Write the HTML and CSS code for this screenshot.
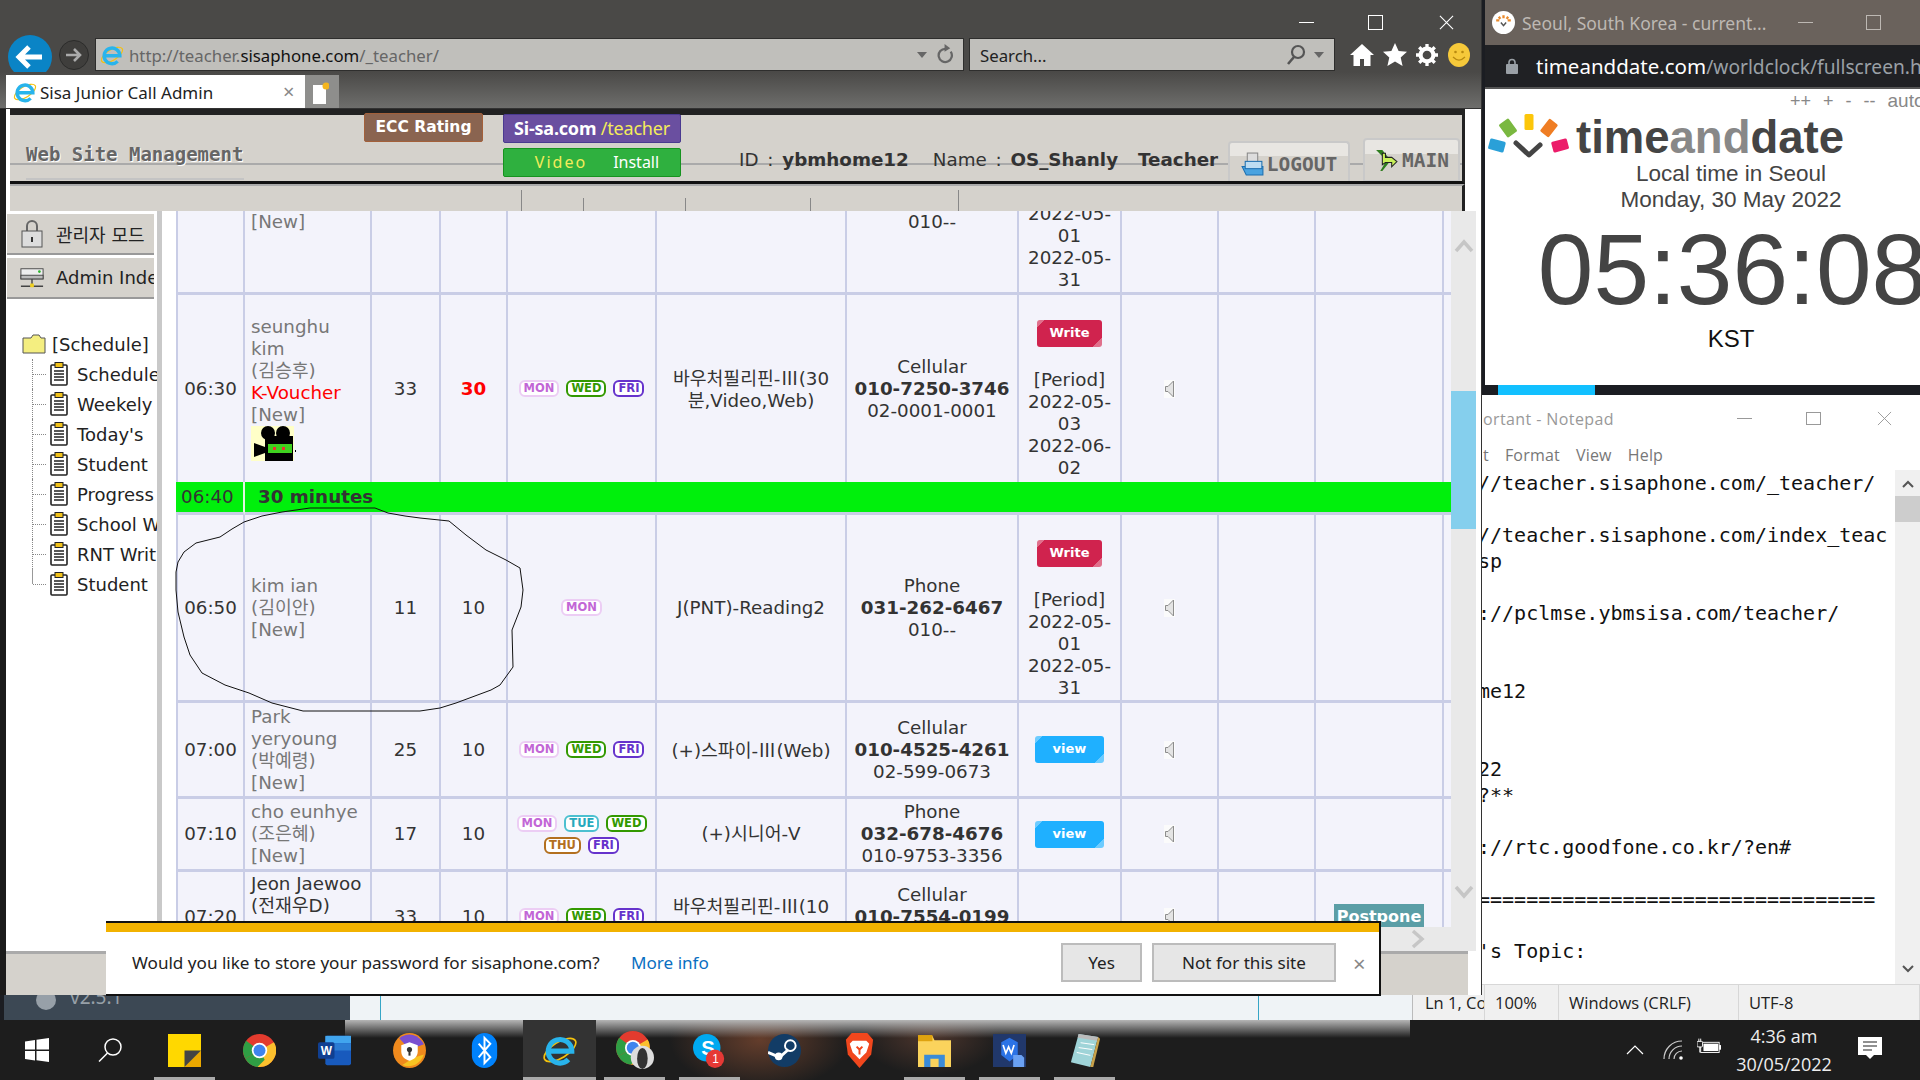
FILE: index.html
```html
<!DOCTYPE html>
<html lang="en">
<head>
    <meta charset="UTF-8">
    <meta name="viewport" content="width=device-width, initial-scale=1.0">
    <title>Sisa Junior Call Admin</title>
    <link rel="stylesheet" href="styles.css">
</head>
<body>
    <svg class="defs" width="0" height="0">
        <symbol id="ie" viewBox="0 0 32 32">
            <ellipse cx="16" cy="16" rx="16" ry="7" transform="rotate(-32 16 16)" fill="none" stroke="#f4c20d" stroke-width="1.5"/>
            <path d="M6 17h20.500a10.500 10.500 0 1 0-3 7.500" fill="none" stroke="#28b4ec" stroke-width="4.500"/>
        </symbol>
        <symbol id="speaker" viewBox="0 0 11 18">
            <rect width="11" height="18" fill="#fbfbfb"/>
            <path d="M9.5 1 4 6.5H1.5v5H4L9.5 17Z" fill="#e4e4e4" stroke="#8d8d8d"/>
        </symbol>
        <symbol id="clip" viewBox="0 0 18 24">
            <rect x="1" y="3" width="16" height="20" rx="1" fill="#fff" stroke="#222" stroke-width="1.6"/>
            <rect x="5" y="0.5" width="8" height="5" fill="#f2c21b" stroke="#222"/>
            <path d="M4 9h10M4 12h10M4 15h10M4 18h10" stroke="#222" stroke-width="1.4"/>
        </symbol>
        <symbol id="chrome" viewBox="0 0 32 32">
            <circle cx="16" cy="16" r="16" fill="#e33b2e"/>
            <path d="M16 16 2.2 24A16 16 0 0 1 3 6.5Z" fill="#2f9e44"/>
            <path d="M16 16 30 8a16 16 0 0 1-14 24H14Z" fill="#fbc02d"/>
            <path d="M14 32A16 16 0 0 1 2.2 24L16 16l5 9Z" fill="#2f9e44"/>
            <circle cx="16" cy="16" r="7.5" fill="#fff"/>
            <circle cx="16" cy="16" r="5.8" fill="#3f84ee"/>
        </symbol>
    </svg>

    <!-- window behind the browser, only its bottom edge shows -->
    <div class="win-back">
        <div class="back-side"><span class="back-dot"></span>v2.5.1</div>
        <div class="back-main"><span class="back-rule"></span><span class="back-rule right"></span></div>
    </div>

    <section class="win-clock">
        <div class="clock-title">
            <svg class="clock-fav" viewBox="0 0 22 22">
                <circle cx="11" cy="11" r="11" fill="#fff"/>
                <path d="M4 9h3M6.5 5.5l1.5 2M11 4v3M15.5 5.5l-1.5 2M18 9h-3" stroke-width="2.2" stroke="#ea8a2c"/>
                <path d="M8.5 11l2.5 3 2.5-3" fill="none" stroke="#555" stroke-width="1.4"/>
            </svg>
            <span class="clock-name">Seoul, South Korea - current...</span>
            <span class="clock-min"></span>
            <span class="clock-max"></span>
        </div>
        <div class="clock-url">
            <svg class="clock-lock" viewBox="0 0 12 16"><path d="M3 7V4.5a3 3 0 0 1 6 0V7" fill="none" stroke="#9aa0a6" stroke-width="1.6"/><rect y="6" width="12" height="10" rx="1" fill="#9aa0a6"/></svg>
            <span class="url-host">timeanddate.com</span><span class="url-path">/worldclock/fullscreen.html</span>
        </div>
        <div class="clock-page">
            <div class="clock-zoom"><span>++</span><span>+</span><span>-</span><span>--</span><span class="zoom-auto">auto</span></div>
            <div class="clock-logo">
                <svg class="logo-mark" viewBox="0 0 84 48">
                    <rect x="-6" y="-8" width="12" height="16" rx="1.5" transform="translate(23 14) rotate(-36)" fill="#7ab840"/>
                    <rect x="-4.500" y="-8" width="9" height="16" rx="1.5" transform="translate(44 8)" fill="#fcc60a"/>
                    <rect x="-5.500" y="-8" width="11" height="16" rx="1.5" transform="translate(64 14) rotate(38)" fill="#ef7d23"/>
                    <rect x="-8" y="-5" width="16" height="11" rx="1.500" transform="translate(12 31) rotate(15)" fill="#2aa0d8"/>
                    <rect x="-8" y="-5" width="16" height="11" rx="1.500" transform="translate(75 31) rotate(-15)" fill="#ec1c6a"/>
                    <path d="M31 29l13 12 11-10" fill="none" stroke="#444" stroke-width="5" stroke-linecap="round" stroke-linejoin="round"/>
                </svg>
                <span class="logo-text">time<span class="logo-and">and</span>date</span>
            </div>
            <div class="clock-place">Local time in Seoul<br>Monday, 30 May 2022</div>
            <div class="clock-time">05:36:08</div>
            <div class="clock-zone">KST</div>
        </div>
    </section>

    <section class="win-notepad">
        <div class="np-title">
            <span class="np-name">ortant - Notepad</span>
            <span class="np-min"></span>
            <span class="np-max"></span>
            <svg class="np-close" viewBox="0 0 16 16"><path d="M1 1l14 14M15 1 1 15" stroke="#999" stroke-width="1"/></svg>
        </div>
        <div class="np-menu"><span>t</span><span>Format</span><span>View</span><span>Help</span></div>
        <div class="np-body">
<pre class="np-text">//teacher.sisaphone.com/_teacher/

//teacher.sisaphone.com/index_teac
sp

://pclmse.ybmsisa.com/teacher/


me12


22
?**

://rtc.goodfone.co.kr/?en#

=================================

's Topic:</pre>
            <div class="np-scroll">
                <svg class="np-arrow" viewBox="0 0 12 8"><path d="M1 7l5-5 5 5" fill="none" stroke="#555" stroke-width="2"/></svg>
                <div class="np-thumb"></div>
                <svg class="np-arrow down" viewBox="0 0 12 8"><path d="M1 1l5 5 5-5" fill="none" stroke="#555" stroke-width="2"/></svg>
            </div>
        </div>
        <div class="np-status">
            <span class="st-ln">Ln 1, Co</span>
            <span class="st-zoom">100%</span>
            <span class="st-eol">Windows (CRLF)</span>
            <span class="st-enc">UTF-8</span>
        </div>
    </section>

    <section class="win-ie">
        <div class="ie-title">
            <span class="ie-min"></span>
            <span class="ie-max"></span>
            <svg class="ie-close" viewBox="0 0 16 16"><path d="M1 1l14 14M15 1 1 15" stroke="#fff" stroke-width="1.200"/></svg>
        </div>
        <div class="ie-nav">
            <svg class="nav-back" viewBox="0 0 44 44"><ellipse cx="22" cy="22" rx="22" ry="22" fill="#0a84c6"/><path d="M34 22H12M21 12 11 22l10 10" fill="none" stroke="#fff" stroke-width="5"/></svg>
            <svg class="nav-fwd" viewBox="0 0 30 30"><circle cx="15" cy="15" r="14.500" fill="#3f3e3c" stroke="#2c2c2b"/><path d="M7 15h14M15 9l6 6-6 6" fill="none" stroke="#aaa" stroke-width="2.600"/></svg>
            <div class="url-box">
                <svg class="url-ie"><use href="#ie"/></svg>
                <span class="url-text">http://teacher.<b>sisaphone.com</b>/_teacher/</span>
                <span class="caret"></span>
                <svg class="url-reload" viewBox="0 0 18 22"><path d="M14.500 8a7 7 0 1 1-5.500-3" fill="none" stroke="#666" stroke-width="2.400"/><path d="M8 0l6 4.500-6 3.500Z" fill="#666"/></svg>
            </div>
            <div class="search-box">
                <span class="search-text">Search...</span>
                <svg class="search-ico" viewBox="0 0 20 22"><circle cx="12" cy="8" r="6" fill="none" stroke="#555" stroke-width="2.200"/><path d="M8 13 2 20" stroke="#555" stroke-width="2.600"/></svg>
                <span class="caret"></span>
            </div>
            <div class="ie-tools">
                <svg class="tool-home" viewBox="0 0 24 22"><path d="M12 0 0 11h3.500v11H10v-7h4v7h6.500V11H24Z" fill="#fff"/></svg>
                <svg class="tool-star" viewBox="0 0 24 23"><path d="M12 0l3.600 8 8.400.8-6.300 5.700 1.900 8.500L12 18.500 4.400 23l1.900-8.500L0 8.800 8.400 8Z" fill="#fff"/></svg>
                <svg class="tool-gear" viewBox="0 0 24 24"><circle cx="12" cy="12" r="7" fill="none" stroke="#fff" stroke-width="4.500"/><path d="M12 0v5M12 19v5M0 12h5M19 12h5M3.500 3.500l3.500 3.500M17 17l3.500 3.500M20.500 3.500 17 7M7 17l-3.500 3.500" stroke="#fff" stroke-width="3.600"/></svg>
                <svg class="tool-smile" viewBox="0 0 22 24"><ellipse cx="11" cy="12" rx="11" ry="12" fill="#f6c93a"/><circle cx="7.500" cy="9" r="1.300" fill="#b98a10"/><circle cx="14.500" cy="9" r="1.300" fill="#b98a10"/><path d="M5 14q6 6 12 0" fill="none" stroke="#b98a10" stroke-width="1.200"/></svg>
            </div>
        </div>
        <div class="ie-tabs">
            <div class="tab">
                <svg class="tab-ie"><use href="#ie"/></svg>
                <span class="tab-name">Sisa Junior Call Admin</span>
                <span class="tab-x">×</span>
            </div>
            <div class="tab-new">
                <svg viewBox="0 0 16 22"><rect y="3" width="13" height="19" fill="#fff"/><circle cx="13" cy="4" r="3.500" fill="#f4b51d"/></svg>
            </div>
        </div>

        <div class="ie-page">
            <header class="site-head">
                <h1 class="site-title">Web Site Management</h1>
                <a class="btn-ecc">ECC Rating</a>
                <div class="btn-stack">
                    <a class="btn-sisa">Si-sa.com <em>/teacher</em></a>
                    <a class="btn-video"><em>Video</em> <span>Install</span></a>
                </div>
                <div class="who">ID : <b>ybmhome12</b><span class="who-name">Name : <b>OS_Shanly</b></span><b class="who-role">Teacher</b></div>
                <a class="btn-logout">
                    <svg viewBox="0 0 22 24"><rect x="6" y="1" width="10" height="10" fill="#ddd" stroke="#888"/><path d="M1 14h20v8H5z" fill="#4aa3e0" stroke="#1c6fb0"/><rect x="4" y="9" width="16" height="7" fill="#bcdcf2" stroke="#1c6fb0"/></svg>
                    LOGOUT
                </a>
                <a class="btn-main">
                    <svg viewBox="0 0 24 24"><path d="M2 2h6l8 10-8 10H6l6-10Z" fill="#2f7d1f"/><path d="M8 5h3v4h6l5 4-5 5v-4h-6l-3 2Z" fill="#c8f05a" stroke="#222"/></svg>
                    MAIN
                </a>
            </header>
            <nav class="site-tabs"><span></span><span></span><span></span><span></span><span></span></nav>

            <div class="ie-main">
                <aside class="side">
                    <a class="side-btn">
                        <svg viewBox="0 0 22 28"><path d="M6 12V6a5 5 0 0 1 10 0v6" fill="none" stroke="#666" stroke-width="2"/><rect x="1" y="11" width="20" height="16" fill="#ddd" stroke="#555"/><rect x="10" y="17" width="2" height="5" fill="#333"/></svg>
                        <span>관리자 모드</span>
                    </a>
                    <a class="side-btn">
                        <svg viewBox="0 0 26 24"><rect x="1" y="2" width="24" height="11" fill="#eee" stroke="#444"/><rect x="1" y="9" width="24" height="4" fill="#bbb" stroke="#444"/><circle cx="21" cy="5" r="1.500" fill="#2db52d"/><path d="M13 13v6M1 21h24" stroke="#444" stroke-width="1.500"/><rect x="11" y="18" width="4" height="4" fill="#f0d020"/></svg>
                        <span>Admin Index</span>
                    </a>
                    <div class="tree-root">
                        <svg viewBox="0 0 24 20"><path d="M1 4h8l2-3h6l2 3h4v15H1z" fill="#f4ee80" stroke="#555"/></svg>
                        <span>[Schedule]</span>
                    </div>
                    <ul class="tree">
                        <li><svg><use href="#clip"/></svg><span>Schedule</span></li>
                        <li><svg><use href="#clip"/></svg><span>Weekely</span></li>
                        <li><svg><use href="#clip"/></svg><span>Today's</span></li>
                        <li><svg><use href="#clip"/></svg><span>Student</span></li>
                        <li><svg><use href="#clip"/></svg><span>Progress</span></li>
                        <li><svg><use href="#clip"/></svg><span>School W</span></li>
                        <li><svg><use href="#clip"/></svg><span>RNT Writ</span></li>
                        <li><svg><use href="#clip"/></svg><span>Student</span></li>
                    </ul>
                </aside>
                <div class="side-strip"></div>

                <div class="work">
                    <div class="grid-view">
                        <table class="grid">
                            <colgroup>
                                <col class="c-time"><col class="c-name"><col class="c-a"><col class="c-b"><col class="c-days"><col class="c-course"><col class="c-phone"><col class="c-date"><col class="c-snd"><col class="c-e1"><col class="c-e2"><col class="c-e3">
                            </colgroup>
                            <tr class="r-kim">
                                <td></td>
                                <td class="name">&nbsp;<br>&nbsp;<br>[New]</td>
                                <td></td><td></td><td></td><td></td>
                                <td>&nbsp;<br>&nbsp;<br>010--</td>
                                <td class="date"><span class="btn-write"></span>[Period]<br>2022-05-<br>01<br>2022-05-<br>31</td>
                                <td></td><td></td><td></td><td></td>
                            </tr>
                            <tr class="r-seung">
                                <td>06:30</td>
                                <td class="name">seunghu<br>kim<br>(김승후)<br><span class="voucher">K-Voucher</span><br>[New]<br>
                                    <svg class="cam" viewBox="0 0 45 35"><rect width="43" height="35" fill="#ffffc8"/><circle cx="17" cy="7" r="7" fill="#000"/><circle cx="32" cy="7" r="7" fill="#000"/><rect x="14" y="10" width="28" height="25" fill="#000"/><path d="M3 17l11 4v6L3 31Z" fill="#000"/><rect x="17" y="18" width="24" height="9" fill="#3fd21f"/><rect x="22" y="21" width="3" height="3" fill="#e33"/><rect x="31" y="21" width="3" height="3" fill="#e33"/><rect x="44" y="24" width="1" height="2" fill="#000"/></svg>
                                </td>
                                <td>33</td>
                                <td class="red">30</td>
                                <td><div class="days"><span class="day mon">MON</span><span class="day wed">WED</span><span class="day fri">FRI</span></div></td>
                                <td>바우처필리핀-<span class="kr">Ⅲ</span>(30<br>분,Video,Web)</td>
                                <td>Cellular<br><b>010-7250-3746</b><br>02-0001-0001</td>
                                <td class="date"><a class="btn-write">Write</a>[Period]<br>2022-05-<br>03<br>2022-06-<br>02</td>
                                <td><svg class="snd"><use href="#speaker"/></svg></td>
                                <td></td><td></td><td></td>
                            </tr>
                            <tr class="r-gap">
                                <td>06:40</td>
                                <td colspan="11"><b>30 minutes</b></td>
                            </tr>
                            <tr class="r-kim">
                                <td>06:50</td>
                                <td class="name">kim ian<br>(김이안)<br>[New]</td>
                                <td>11</td>
                                <td>10</td>
                                <td><div class="days"><span class="day mon">MON</span></div></td>
                                <td>J(PNT)-Reading2</td>
                                <td>Phone<br><b>031-262-6467</b><br>010--</td>
                                <td class="date"><a class="btn-write">Write</a>[Period]<br>2022-05-<br>01<br>2022-05-<br>31</td>
                                <td><svg class="snd"><use href="#speaker"/></svg></td>
                                <td></td><td></td><td></td>
                            </tr>
                            <tr class="r-park">
                                <td>07:00</td>
                                <td class="name">Park yeryoung<br>(박예령)<br>[New]</td>
                                <td>25</td>
                                <td>10</td>
                                <td><div class="days"><span class="day mon">MON</span><span class="day wed">WED</span><span class="day fri">FRI</span></div></td>
                                <td>(+)스파이-<span class="kr">Ⅲ</span>(Web)</td>
                                <td>Cellular<br><b>010-4525-4261</b><br>02-599-0673</td>
                                <td><a class="btn-view">view</a></td>
                                <td><svg class="snd"><use href="#speaker"/></svg></td>
                                <td></td><td></td><td></td>
                            </tr>
                            <tr class="r-cho">
                                <td>07:10</td>
                                <td class="name">cho eunhye<br>(조은혜)<br>[New]</td>
                                <td>17</td>
                                <td>10</td>
                                <td><div class="days"><span class="day mon">MON</span><span class="day tue">TUE</span><span class="day wed">WED</span><span class="day thu">THU</span><span class="day fri">FRI</span></div></td>
                                <td>(+)시니어-V</td>
                                <td>Phone<br><b>032-678-4676</b><br>010-9753-3356</td>
                                <td><a class="btn-view">view</a></td>
                                <td><svg class="snd"><use href="#speaker"/></svg></td>
                                <td></td><td></td><td></td>
                            </tr>
                            <tr class="r-jeon">
                                <td>07:20</td>
                                <td class="name"><span class="dark">Jeon Jaewoo<br>(전재우D)</span><br>&nbsp;<br>&nbsp;</td>
                                <td>33</td>
                                <td>10</td>
                                <td><div class="days"><span class="day mon">MON</span><span class="day wed">WED</span><span class="day fri">FRI</span></div></td>
                                <td>바우처필리핀-<span class="kr">Ⅲ</span>(10<br>&nbsp;</td>
                                <td>Cellular<br><b>010-7554-0199</b><br>&nbsp;</td>
                                <td></td>
                                <td><svg class="snd"><use href="#speaker"/></svg></td>
                                <td></td>
                                <td><a class="btn-postpone">Postpone</a></td>
                                <td></td>
                            </tr>
                        </table>
                    </div>
                    <div class="hscroll">
                        <svg viewBox="0 0 14 20"><path d="M2 2l9 8-9 8" fill="none" stroke="#c6c6c6" stroke-width="3.500"/></svg>
                    </div>
                </div>

                <div class="vscroll">
                    <svg class="v-up" viewBox="0 0 20 14"><path d="M2 12l8-9 8 9" fill="none" stroke="#c6c6c6" stroke-width="3.500"/></svg>
                    <div class="v-thumb"></div>
                    <svg class="v-down" viewBox="0 0 20 14"><path d="M2 2l8 9 8-9" fill="none" stroke="#c6c6c6" stroke-width="3.500"/></svg>
                </div>
            </div>
            <div class="site-foot"></div>
        </div>

        <svg class="scribble" viewBox="0 0 1482 995">
            <path d="M176 572L178 562 184 552 196 543 208 540 220 537 232 529 244 522 262 516 282 512 310 508H375L388 513 405 516 420 518 449 521 466 535 486 550 506 560 520 568 523 590 521 607 512 630 513 667 500 685 491 690 456 703 440 708 420 711H303L272 703 249 693 225 685 202 673 190 655 184 637 178 612 176 590Z" fill="none" stroke="#111" stroke-width="1"/>
        </svg>

        <div class="infobar">
            <span class="info-text">Would you like to store your password for sisaphone.com?</span>
            <a class="info-link">More info</a>
            <a class="info-btn yes">Yes</a>
            <a class="info-btn">Not for this site</a>
            <span class="info-x">×</span>
        </div>
    </section>

    <footer class="taskbar">
        <div class="start">
            <svg viewBox="0 0 24 24"><path d="M0 3.500 10 2v9.500H0ZM11.500 1.800 24 0v11.500H11.500ZM0 13h10v9.500L0 21ZM11.500 13H24v11l-12.500-1.800Z" fill="#fff"/></svg>
        </div>
        <div class="find">
            <svg viewBox="0 0 24 24"><circle cx="15" cy="9" r="8" fill="none" stroke="#fff" stroke-width="1.500"/><path d="M9.500 15 1 23.500" stroke="#fff" stroke-width="1.500"/></svg>
        </div>
        <div class="app run"><svg viewBox="0 0 32 32"><path d="M0 0h32v22L22 32H0Z" fill="#ffd800"/><path d="M32 16v16H16Z" fill="#eba800"/><path d="M16 32l16-16H16Z" fill="#444"/></svg></div>
        <div class="app"><svg><use href="#chrome"/></svg></div>
        <div class="app"><svg viewBox="0 0 36 32"><rect x="8" width="28" height="32" rx="2" fill="#185abd"/><rect x="8" width="28" height="8" fill="#41a5ee"/><rect x="8" y="8" width="28" height="8" fill="#2b7cd3"/><rect y="7" width="18" height="18" rx="2" fill="#103f91"/><text x="9" y="21" class="tb-letter">W</text></svg></div>
        <div class="app"><svg viewBox="0 0 32 34"><ellipse cx="16" cy="17" rx="16" ry="17" fill="#f08a1d"/><path d="M6 5a16 17 0 0 1 24 6L16 16Z" fill="#7a4fd0"/><path d="M9 31a16 17 0 0 0 21-10L20 24Z" fill="#f7c321"/><path d="M16 9l8 3v6c0 5-4 8-8 9-4-1-8-4-8-9v-6Z" fill="#fff"/><circle cx="16" cy="16" r="2.500" fill="#333"/><rect x="15" y="17" width="2" height="5" fill="#333"/></svg></div>
        <div class="app"><svg viewBox="0 0 26 36"><rect width="26" height="36" rx="13" fill="#0082fc"/><path d="M7 11l12 14-6 6V5l6 6L7 25" fill="none" stroke="#fff" stroke-width="2"/></svg></div>
        <div class="app active"><svg class="tb-ie"><use href="#ie"/></svg></div>
        <div class="app run"><svg class="tb-chrome2" viewBox="0 0 36 36"><use href="#chrome" width="32" height="32"/><circle cx="25" cy="25" r="11" fill="#ddd"/><ellipse cx="25" cy="26" rx="5" ry="10" fill="#333"/></svg></div>
        <div class="app run"><svg viewBox="0 0 36 38"><circle cx="15" cy="16" r="15" fill="#00a9f0"/><text x="9" y="24" class="tb-skype">S</text><circle cx="24" cy="28" r="10" fill="#e53935"/><text x="21" y="33" class="tb-badge">1</text></svg></div>
        <div class="app"><svg viewBox="0 0 34 34"><circle cx="17" cy="17" r="17" fill="#123c66"/><circle cx="23" cy="12" r="5.500" fill="none" stroke="#fff" stroke-width="2"/><path d="M0 19l12 5 9-8" fill="none" stroke="#fff" stroke-width="3"/><circle cx="11" cy="23" r="4" fill="#fff"/></svg></div>
        <div class="app"><svg viewBox="0 0 30 36"><path d="M7 0h16l6 7-2 15-12 14L3 22 1 7Z" fill="#f1471d"/><path d="M8 8h14l3 3-3 9-3 3-4 4-4-4-3-3-3-9Z" fill="#fff"/><path d="M12 14l3 3 3-3M15 17v5" stroke="#f1471d" stroke-width="2" fill="none"/></svg></div>
        <div class="app run"><svg viewBox="0 0 32 32"><path d="M0 2h14l2 4h16v26H0Z" fill="#fbd35c"/><rect width="14" height="6" y="1" fill="#dea20f"/><path d="M6 32V20h20v12h-6v-8h-8v8Z" fill="#3a8bd8"/></svg></div>
        <div class="app run"><svg viewBox="0 0 36 36"><rect width="36" height="36" fill="#21386b"/><path d="M9 9l9-5 9 5v14l-9 7-9-7Z" fill="#2b73e6"/><path d="M11 12l3 9 3-7 3 7 3-9" fill="none" stroke="#fff" stroke-width="1.800"/><path d="M22 23h9l3 3v10H22Z" fill="#6aa1f2"/></svg></div>
        <div class="app run"><svg viewBox="0 0 32 36"><path d="M10 1l20 3-8 31-20-5Z" fill="#9fd4d8"/><path d="M10 1l20 3-1 4-20-3Z" fill="#bbb"/><path d="M12 10l14 2M10 15l14 2M8 20l14 3" stroke="#fff" stroke-width="1"/><path d="M30 4l2 2-7 29-3 0Z" fill="#c9a24a"/></svg></div>
        <div class="tray">
            <svg class="tray-up" viewBox="0 0 18 10"><path d="M1 9l8-8 8 8" fill="none" stroke="#fff" stroke-width="1.200"/></svg>
            <svg class="tray-wifi" viewBox="0 0 20 20"><path d="M1 19A18 18 0 0 1 19 1M6 19A13 13 0 0 1 19 6M11 19a8 8 0 0 1 8-8" fill="none" stroke="#ccc" stroke-width="1.200"/><circle cx="18" cy="18" r="1.800" fill="#fff"/></svg>
            <svg class="tray-batt" viewBox="0 0 26 16"><rect x="4" y="4" width="20" height="11" fill="none" stroke="#fff"/><rect x="7" y="5.500" width="16" height="8" fill="#fff"/><rect x="24" y="7" width="2" height="5" fill="#fff"/><rect x="0" y="3" width="6" height="6" rx="1" fill="#222" stroke="#fff"/><path d="M2 0v3M4 0v3M3 9v6" stroke="#fff"/></svg>
            <div class="tray-clock">4:36 am<br>30/05/2022</div>
            <svg class="tray-note" viewBox="0 0 24 24"><path d="M0 0h24v18h-8l-4 4-4-4H0Z" fill="#fff"/><path d="M5 5h14M5 9h14M5 13h9" stroke="#222" stroke-width="1.200"/></svg>
        </div>
    </footer>
</body>
</html>
```

FILE: styles.css
```css
* {
    box-sizing: border-box;
}
html, body {
    margin: 0;
    padding: 0;
}
body {
    position: relative;
    width: 1920px;
    height: 1080px;
    overflow: hidden;
    background: linear-gradient(#12c0ff, #12c0ff) 1498px 385px / 97px 10px no-repeat, #1b1d22;
    font-family: "DejaVu Sans", "Noto Sans CJK KR", sans-serif;
}
.defs {
    position: absolute;
}
svg {
    display: block;
    flex: none;
}

/* windows on the desktop */
.win-back {
    position: absolute;
    left: 4px;
    top: 960px;
    width: 1420px;
    height: 60px;
    display: flex;
    background: #eff3f6;
}
.win-clock {
    position: absolute;
    left: 1485px;
    top: 0;
    width: 435px;
    height: 385px;
    overflow: hidden;
    background: #fff;
}
.win-notepad {
    position: absolute;
    left: 1412px;
    top: 395px;
    width: 508px;
    height: 625px;
    display: flex;
    flex-direction: column;
    background: #fff;
}
.win-ie {
    position: absolute;
    left: 0;
    top: 0;
    width: 1482px;
    height: 995px;
    display: flex;
    flex-direction: column;
    background: #4a4947;
    border-right: 1px solid #333;
}

/* back window */
.back-side {
    width: 346px;
    background: #3c4854;
    color: #97a0a8;
    font: 19px "Noto Sans", sans-serif;
    display: flex;
    align-items: flex-end;
    gap: 14px;
    padding: 0 0 10px 32px;
}
.back-dot {
    width: 20px;
    height: 20px;
    border-radius: 50%;
    background: #97a0a8;
}
.back-main {
    flex: 1;
    display: flex;
    padding-left: 30px;
}
.back-rule {
    width: 1px;
    background: #35a5c6;
}
.back-rule.right {
    margin-left: 877px;
}

/* clock window */
.clock-title {
    height: 45px;
    background: #6a625c;
    display: flex;
    align-items: center;
    padding-left: 7px;
}
.clock-fav {
    width: 23px;
    height: 23px;
}
.clock-name {
    margin-left: 7px;
    font: 17.5px "Noto Sans", sans-serif;
    color: #bdb8b3;
    width: 276px;
    white-space: nowrap;
}
.clock-min {
    width: 15px;
    height: 1px;
    background: #bdb8b3;
}
.clock-max {
    width: 15px;
    height: 15px;
    border: 1px solid #bdb8b3;
    margin-left: 53px;
}
.clock-url {
    height: 44px;
    background: #202124;
    border-bottom: 2px solid #555;
    display: flex;
    align-items: center;
    padding-left: 21px;
    font: 20.5px "Noto Sans", sans-serif;
    white-space: nowrap;
}
.clock-lock {
    width: 12px;
    height: 16px;
    margin-right: 18px;
}
.url-host {
    color: #fff;
}
.url-path {
    color: #9aa0a6;
    font-size: 19.2px;
}
.clock-page {
    width: 492px;
    font-family: "Liberation Sans", sans-serif;
    color: #444;
    text-align: center;
}
.clock-zoom {
    display: flex;
    color: #888;
    font-size: 18px;
    height: 25px;
    padding: 2px 0 0 305px;
    gap: 12px;
    line-height: 20px;
}
.clock-zoom .zoom-auto {
    font-size: 19px;
}
.clock-logo {
    display: flex;
    align-items: center;
    height: 48px;
}
.logo-mark {
    width: 84px;
    height: 48px;
}
.logo-text {
    margin-left: 7px;
    font-size: 45.500px;
    font-weight: bold;
    color: #444;
    line-height: 48px;
}
.logo-and {
    color: #888;
}
.clock-place {
    font-size: 22.500px;
    line-height: 26px;
    margin-top: -1px;
}
.clock-time {
    font-size: 100px;
    line-height: 110px;
    margin-top: 1px;
    padding-left: 3px;
}
.clock-zone {
    font-size: 24px;
    line-height: 28px;
    color: #111;
    margin-top: 1px;
}

/* notepad */
.np-title {
    height: 47px;
    display: flex;
    align-items: center;
    padding-left: 71px;
    font: 16px "Open Sans", sans-serif;
    letter-spacing: 0.4px;
    color: #999;
}
.np-name {
    width: 254px;
    white-space: nowrap;
}
.np-min {
    width: 15px;
    height: 1px;
    background: #999;
}
.np-max {
    width: 15px;
    height: 13px;
    border: 1px solid #999;
    margin-left: 54px;
}
.np-close {
    width: 15px;
    height: 15px;
    margin-left: 56px;
}
.np-menu {
    height: 28px;
    display: flex;
    gap: 16px;
    padding-left: 71px;
    font: 16px/26px "Open Sans", sans-serif;
    letter-spacing: 0.2px;
    color: #777;
}
.np-body {
    flex: 1;
    min-height: 0;
    display: flex;
}
.np-text {
    flex: 1;
    margin: 0;
    padding: 0 0 0 66px;
    overflow: hidden;
    font: 20px/26px "DejaVu Sans Mono", monospace;
    color: #111;
}
.np-scroll {
    width: 25px;
    background: #f0f0f0;
    display: flex;
    flex-direction: column;
    align-items: center;
}
.np-arrow {
    width: 12px;
    height: 8px;
    margin-top: 10px;
}
.np-arrow.down {
    margin-top: 443px;
}
.np-thumb {
    width: 100%;
    height: 26px;
    margin-top: 8px;
    background: #cdcdcd;
}
.np-status {
    height: 36px;
    display: flex;
    background: #f0f0f0;
    border-top: 1px solid #d7d7d7;
    border-left: 1px solid #bbb;
    font: 16.500px/36px "Open Sans", sans-serif;
    color: #222;
    white-space: nowrap;
}
.np-status span {
    padding-left: 10px;
    overflow: hidden;
    border-right: 1px solid #d7d7d7;
}
.np-status .st-ln {
    width: 72px;
    padding-left: 12px;
}
.st-zoom {
    width: 74px;
}
.st-eol {
    width: 180px;
}
.st-enc {
    flex: 1;
}

/* browser chrome */
.ie-title {
    height: 38px;
    display: flex;
    align-items: center;
    padding-left: 1299px;
    padding-top: 6px;
}
.ie-min {
    width: 15px;
    height: 1px;
    background: #fff;
}
.ie-max {
    width: 15px;
    height: 15px;
    border: 1px solid #fff;
    margin-left: 54px;
}
.ie-close {
    width: 15px;
    height: 15px;
    margin-left: 56px;
}
.ie-nav {
    height: 33px;
    display: flex;
    align-items: center;
    padding-left: 8px;
}
.nav-back {
    width: 44px;
    height: 44px;
    margin-top: 5px;
}
.nav-fwd {
    width: 30px;
    height: 30px;
    margin-left: 7px;
}
.url-box, .search-box {
    height: 33px;
    background: #c0bfbb;
    border: 1px solid #2e2e2d;
    display: flex;
    align-items: center;
    font: 16.800px "Noto Sans", sans-serif;
    color: #666;
}
.url-box {
    width: 869px;
    margin-left: 6px;
    padding-left: 4px;
}
.url-ie {
    width: 24px;
    height: 24px;
}
.url-text {
    margin: 2px 0 0 5px;
    width: 788px;
    white-space: nowrap;
}
.url-text b {
    font-weight: normal;
    color: #111;
}
.caret {
    width: 0;
    height: 0;
    border: 5px solid transparent;
    border-top: 6px solid #666;
    border-bottom: 0;
}
.url-reload {
    width: 17px;
    height: 21px;
    margin-left: 10px;
}
.search-box {
    width: 366px;
    margin-left: 5px;
    padding-left: 10px;
    color: #222;
}
.search-text {
    width: 306px;
    margin-top: 2px;
}
.search-ico {
    width: 20px;
    height: 22px;
}
.search-box .caret {
    margin-left: 8px;
}
.ie-tools {
    display: flex;
    align-items: center;
    margin-left: 15px;
}
.tool-home {
    width: 24px;
    height: 22px;
}
.tool-star {
    width: 24px;
    height: 23px;
    margin-left: 9px;
}
.tool-gear {
    width: 22px;
    height: 22px;
    margin-left: 9px;
}
.tool-smile {
    width: 22px;
    height: 24px;
    margin-left: 10px;
}
.ie-tabs {
    height: 37px;
    margin-top: 1px;
    padding: 3px 0 0 6px;
    display: flex;
    background: linear-gradient(#4a4947, #6e6e6c);
    border-bottom: 1px solid #333;
}
.tab {
    width: 299px;
    background: #fff;
    display: flex;
    align-items: center;
    padding-left: 7px;
    font: 17px "Noto Sans", sans-serif;
    color: #222;
}
.tab-ie {
    width: 24px;
    height: 24px;
}
.tab-name {
    margin: 2px 0 0 3px;
    width: 243px;
    white-space: nowrap;
}
.tab-x {
    color: #888;
    font-size: 20px;
}
.tab-new {
    width: 34px;
    background: #8e8e8c;
    padding: 7px 0 0 8px;
}
.tab-new svg {
    width: 16px;
    height: 22px;
}

/* page inside the browser */
.ie-page {
    flex: 1;
    min-height: 0;
    display: flex;
    flex-direction: column;
    background: #fff;
    border-left: 6px solid #1b1b1b;
    color: #333;
}
.site-head {
    height: 75px;
    margin: 0 16px 0 4px;
    border-top: 6px solid #222;
    border-bottom: 3px solid #111;
    border-right: 3px solid #222;
    background: #d5d2cc linear-gradient(#aaa, #aaa) 0 48px / 100% 2px no-repeat;
    display: flex;
    align-items: flex-end;
    white-space: nowrap;
}
.site-title {
    margin: 0 0 1px 16px;
    padding-bottom: 13px;
    border-bottom: 2px solid #c4c4c4;
    width: 218px;
    font: bold 19px/22px "DejaVu Sans Mono", monospace;
    color: #666;
    text-shadow: 1px 1px 0 #fff;
}
.btn-ecc, .btn-sisa, .btn-video {
    display: block;
    height: 29px;
    border-radius: 2px;
    text-align: center;
    font: bold 16px/27px "DejaVu Sans", sans-serif;
    color: #fff;
}
.btn-ecc {
    width: 119px;
    margin: 0 0 39px 120px;
    background: #8a6450;
    border: 1px solid #a3603a;
    font-size: 15.500px;
}
.btn-stack {
    width: 178px;
    margin: 0 0 4px 20px;
    display: flex;
    flex-direction: column;
    gap: 5px;
}
.btn-sisa {
    background: #6a4fa0;
    border: 1px solid #4a3a90;
    font-family: "Noto Sans", sans-serif;
    font-size: 18px;
    letter-spacing: -0.2px;
}
.btn-sisa em, .btn-video em {
    font-style: normal;
    color: #f4ec5a;
    font-weight: normal;
}
.btn-video {
    background: #2fb03f;
    border: 1px solid #17931f;
    font: 16px/27px "Noto Sans", sans-serif;
    display: flex;
    justify-content: center;
    gap: 26px;
    padding-left: 10px;
}
.btn-video em {
    letter-spacing: 2px;
}
.who {
    margin: 0 0 10px 58px;
    width: 489px;
    font-size: 18.300px;
    line-height: 22px;
    word-spacing: 3px;
    color: #333;
}
.who b {
    font-weight: bold;
}
.who-name {
    margin-left: 24px;
}
.who-role {
    margin-left: 20px;
}
.btn-logout, .btn-main {
    display: flex;
    align-items: center;
    justify-content: center;
    gap: 3px;
    border: 2px solid #c9c9c9;
    border-bottom: 0;
    border-radius: 4px 4px 0 0;
    background: linear-gradient(#e8e6e2 35%, #d5d2cc 35%);
    font: bold 19.500px "DejaVu Sans Mono", monospace;
    color: #666;
}
.btn-logout {
    width: 122px;
    height: 40px;
    padding-top: 4px;
}
.btn-logout svg {
    width: 23px;
    height: 25px;
}
.btn-main {
    width: 97px;
    height: 43px;
    margin-left: 13px;
    border-bottom: 1px solid #c9c9c9;
}
.btn-main svg {
    width: 25px;
    height: 25px;
}
.site-tabs {
    height: 27px;
    margin: 0 16px 0 4px;
    background: #d5d2cc;
    border-top: 2px solid #aaa;
    border-right: 3px solid #222;
    display: flex;
    align-items: flex-end;
    padding-left: 511px;
}
.site-tabs span {
    height: 13px;
    border-left: 1px solid #888;
}
.site-tabs span:nth-child(1) {
    width: 62px;
    height: 21px;
}
.site-tabs span:nth-child(2) {
    width: 102px;
}
.site-tabs span:nth-child(3) {
    width: 125px;
}
.site-tabs span:nth-child(4) {
    width: 148px;
}
.site-tabs span:nth-child(5) {
    height: 21px;
}
.ie-main {
    height: 740px;
    display: flex;
}

/* sidebar */
.side {
    width: 151px;
    padding: 3px 3px 0 1px;
    font-size: 18px;
    color: #222;
    overflow: hidden;
}
.side-btn {
    height: 41px;
    margin-bottom: 3px;
    background: #d5d2cc;
    border-bottom: 2px solid #999;
    display: flex;
    align-items: center;
    gap: 12px;
    padding-left: 13px;
    white-space: nowrap;
    overflow: hidden;
}
.side-btn svg {
    width: 24px;
    height: 28px;
}
.tree-root {
    margin-top: 30px;
    height: 30px;
    display: flex;
    align-items: center;
    gap: 6px;
    padding-left: 15px;
}
.tree-root svg {
    width: 24px;
    height: 20px;
}
.tree {
    list-style: none;
    margin: 0 0 0 25px;
    padding: 0;
}
.tree li {
    height: 30px;
    display: flex;
    align-items: center;
    border-left: 1px dotted #888;
    white-space: nowrap;
}
.tree li:last-child {
    border-left: 0;
    padding-left: 1px;
    background: linear-gradient(#999 50%, transparent 50%) 0 0 / 1px 100% no-repeat;
}
.tree li::before {
    content: "";
    flex: none;
    width: 13px;
    border-top: 1px dotted #888;
}
.tree svg {
    width: 18px;
    height: 24px;
    margin: 0 9px 0 4px;
}
.side-strip {
    width: 5px;
    background: #c9c9c9;
    margin-right: 14px;
}

/* schedule table */
.work {
    width: 1275px;
    display: flex;
    flex-direction: column;
}
.grid-view {
    height: 716px;
    overflow: hidden;
}
.grid {
    width: 1275px;
    margin-top: -104px;
    table-layout: fixed;
    border-collapse: separate;
    border-spacing: 0;
    background: #f3f3fb;
    font-size: 18.300px;
    line-height: 22px;
    color: #333;
}
.c-time { width: 69px; }
.c-name { width: 127px; }
.c-a { width: 69px; }
.c-b { width: 67px; }
.c-days { width: 149px; }
.c-course { width: 190px; }
.c-phone { width: 172px; }
.c-date { width: 103px; }
.c-snd { width: 97px; }
.c-e1 { width: 97px; }
.c-e2 { width: 128px; }
.c-e3 { width: 7px; }
.grid td {
    padding: 0;
    text-align: center;
    vertical-align: middle;
    border-right: 2px solid #c9cde6;
    border-bottom: 3px solid #c9cde6;
    overflow: hidden;
}
.grid td:first-child {
    border-left: 2px solid #c9cde6;
}
.grid td:last-child {
    border-right: 0;
}
.r-kim td {
    height: 188px;
}
.r-seung td {
    height: 187px;
    border-bottom: 0;
}
.r-park td {
    height: 96px;
}
.r-cho td {
    height: 73px;
}
.r-jeon td {
    height: 92px;
}
.r-gap td {
    height: 33px;
    background: #00f00c;
    text-align: left;
    padding-left: 13px;
    border-right: 0;
}
.r-gap td:first-child {
    padding-left: 5px;
    border-left: 0;
    border-right: 2px solid #e0f5e0;
    background: #00f00c;
}
.grid td.name {
    text-align: left;
    padding-left: 6px;
    color: #777;
}
.dark {
    color: #333;
}
.kr {
    font-family: "Noto Sans CJK KR", sans-serif;
}
.voucher, .red {
    color: #f00;
}
.grid td.red {
    font-weight: bold;
}
.cam {
    width: 45px;
    height: 35px;
}
.days {
    display: flex;
    flex-wrap: wrap;
    justify-content: center;
    gap: 5px 7px;
    padding: 0 4px;
}
.day {
    height: 17px;
    padding: 0 3px;
    border: 2px solid;
    border-radius: 6px;
    background: #fff;
    font-size: 11.500px;
    font-weight: bold;
    line-height: 13px;
}
.mon {
    color: #c266d6;
    border-color: #eccdf4;
}
.tue {
    color: #27a9bd;
    border-color: #4cc0d0;
}
.wed {
    color: #339900;
    border-color: #339900;
}
.thu {
    color: #b3701f;
    border-color: #b3701f;
}
.fri {
    color: #6633cc;
    border-color: #6633cc;
}
.grid td.date {
    vertical-align: top;
    padding-top: 25px;
}
.btn-write, .btn-view {
    display: block;
    width: 65px;
    height: 27px;
    margin: 0 auto;
    border-radius: 3px;
    font: bold 13px/26px "DejaVu Sans", sans-serif;
    color: #fff;
    text-align: center;
}
.btn-write {
    margin-bottom: 22px;
    background: linear-gradient(135deg, rgba(255, 255, 255, 0.35) 8%, transparent 8%, transparent 90%, rgba(255, 255, 255, 0.35) 90%), #d0234e;
}
.btn-view {
    width: 69px;
    background: linear-gradient(135deg, rgba(255, 255, 255, 0.35) 8%, transparent 8%, transparent 90%, rgba(255, 255, 255, 0.35) 90%), #1fb0ff;
}
.snd {
    width: 11px;
    height: 18px;
    margin: 0 auto;
}
.btn-postpone {
    display: block;
    width: 90px;
    height: 26px;
    margin: 0 auto;
    background: #5b9ea6;
    color: #fff;
    font-weight: bold;
    font-size: 16px;
    line-height: 26px;
    white-space: nowrap;
}

/* scrollbars */
.hscroll {
    height: 24px;
    background: #e9e9e9;
    display: flex;
    justify-content: flex-end;
    align-items: center;
    padding-right: 26px;
}
.hscroll svg {
    width: 14px;
    height: 20px;
}
.vscroll {
    width: 25px;
    background: #e9e9e9;
    display: flex;
    flex-direction: column;
    align-items: center;
}
.v-up, .v-down {
    width: 20px;
    height: 14px;
}
.v-up {
    margin-top: 28px;
}
.v-thumb {
    width: 100%;
    height: 138px;
    margin-top: 138px;
    background: #85cfed;
}
.v-down {
    margin-top: 356px;
}
.site-foot {
    flex: 1;
    margin-right: 13px;
    background: #d5d2cc;
    border-top: 3px solid #aaa;
}

/* overlays on the browser */
.scribble {
    position: absolute;
    left: 0;
    top: 0;
    width: 1482px;
    height: 995px;
    pointer-events: none;
}
.infobar {
    position: absolute;
    left: 106px;
    top: 921px;
    width: 1275px;
    height: 75px;
    display: flex;
    align-items: center;
    padding: 8px 0 0 26px;
    background: linear-gradient(#f2b200 9px, #fff 9px) 0 0 no-repeat;
    border: 2px solid #111;
    border-width: 2px 2px 2px 0;
    font: 17.100px "Noto Sans", sans-serif;
    color: #222;
}
.info-text {
    width: 499px;
    white-space: nowrap;
}
.info-link {
    width: 430px;
    color: #0a6fc2;
}
.info-btn {
    height: 39px;
    padding: 0 28px;
    background: #e6e6e6;
    border: 2px solid #bcbcbc;
    line-height: 35px;
    margin-right: 10px;
}
.info-btn.yes {
    width: 81px;
    text-align: center;
    padding: 0;
}
.info-x {
    margin-left: 7px;
    color: #888;
    font-size: 22px;
}

/* taskbar */
.taskbar {
    position: absolute;
    left: 0;
    top: 1020px;
    width: 1920px;
    height: 60px;
    display: flex;
    background:
        linear-gradient(#b5b5b5, rgba(181, 181, 181, 0) 18px) 345px 0 / 1065px 18px no-repeat,
        radial-gradient(90px 50px at 760px 20px, rgba(130, 75, 50, 0.7), transparent),
        radial-gradient(70px 40px at 930px 15px, rgba(110, 70, 55, 0.6), transparent),
        #1d1d1d;
}
.start, .find {
    width: 73px;
    display: flex;
    align-items: center;
    justify-content: center;
}
.start svg, .find svg {
    width: 24px;
    height: 24px;
}
.find {
    width: 74px;
}
.app {
    width: 75px;
    display: flex;
    align-items: center;
    justify-content: center;
}
.app svg {
    width: 33px;
    height: 35px;
}
.app.run {
    background: linear-gradient(#aaa, #aaa) center bottom / 61px 3px no-repeat;
}
.app.active {
    background: linear-gradient(#aaa, #aaa) center bottom / 73px 3px no-repeat, linear-gradient(#333, #333) center / 73px 100% no-repeat;
}
.app svg.tb-ie {
    width: 36px;
    height: 36px;
}
.app svg.tb-chrome2 {
    width: 38px;
    height: 38px;
}
.tb-letter {
    font: bold 13px "Liberation Sans", sans-serif;
    fill: #fff;
    text-anchor: middle;
}
.tb-skype {
    font: bold 22px "Liberation Sans", sans-serif;
    fill: #fff;
}
.tb-badge {
    font: 13px "Liberation Sans", sans-serif;
    fill: #fff;
}
.tray {
    flex: 1;
    display: flex;
    align-items: center;
    padding-left: 504px;
}
.tray-up {
    width: 18px;
    height: 10px;
}
.tray-wifi {
    width: 20px;
    height: 20px;
    margin-left: 19px;
}
.tray-batt {
    width: 24px;
    height: 16px;
    margin: -8px 0 0 14px;
}
.tray-clock {
    width: 120px;
    margin-left: 3px;
    font: 18px/28px "Open Sans", sans-serif;
    color: #eee;
    text-align: center;
}
.tray-note {
    width: 24px;
    height: 24px;
    margin: -2px 0 0 14px;
}
```
